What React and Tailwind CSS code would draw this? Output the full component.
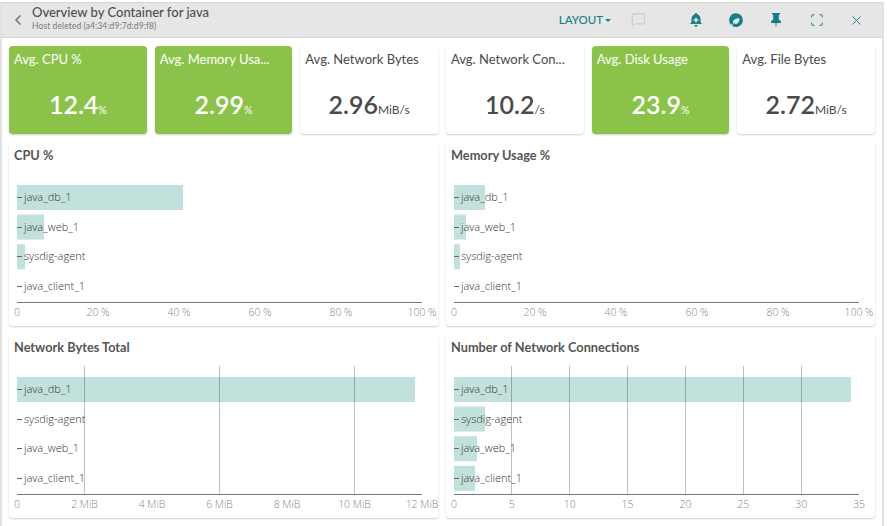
import { ChevronLeft, MessageSquare, Scan, X } from 'lucide-react';

const stats = [
  { title: 'Avg. CPU %', value: '12.4', unit: '%', green: true },
  { title: 'Avg. Memory Usa...', value: '2.99', unit: '%', green: true },
  { title: 'Avg. Network Bytes', value: '2.96', unit: 'MiB/s' },
  { title: 'Avg. Network Con...', value: '10.2', unit: '/s' },
  { title: 'Avg. Disk Usage', value: '23.9', unit: '%', green: true },
  { title: 'Avg. File Bytes', value: '2.72', unit: 'MiB/s' },
];

const pct = ['0', '20 %', '40 %', '60 %', '80 %', '100 %'];

const charts = [
  {
    title: 'CPU %',
    ticks: pct,
    rows: [['java_db_1', 166], ['java_web_1', 27], ['sysdig-agent', 8], ['java_client_1', 0]],
  },
  {
    title: 'Memory Usage %',
    ticks: pct,
    rows: [['java_db_1', 31], ['java_web_1', 12], ['sysdig-agent', 6], ['java_client_1', 0]],
  },
  {
    title: 'Network Bytes Total',
    gridEvery: 2,
    ticks: ['0', '2 MiB', '4 MiB', '6 MiB', '8 MiB', '10 MiB', '12 MiB'],
    rows: [['java_db_1', 398], ['sysdig-agent', 0], ['java_web_1', 0], ['java_client_1', 0]],
  },
  {
    title: 'Number of Network Connections',
    gridEvery: 1,
    ticks: ['0', '5', '10', '15', '20', '25', '30', '35'],
    rows: [['java_db_1', 397], ['sysdig-agent', 31], ['java_web_1', 23], ['java_client_1', 21]],
  },
];

function StatCard({ title, value, unit, green }) {
  return (
    <div className={`h-[88px] min-w-0 rounded-sm px-[5px] pt-[4px] shadow-[0_1px_2px_rgba(0,0,0,0.2)] ${green ? 'bg-[#8bc34a] text-white' : 'bg-white text-[#4a4a4a]'}`}>
      <p className="truncate text-[13px] leading-[18px]">{title}</p>
      <p className="mt-[19px] text-center leading-[34px]">
        <span className="text-[25px] font-semibold">{value}</span>
        <span className={unit === '%' ? 'text-[10.5px]' : 'text-[12px]'}>{unit}</span>
      </p>
    </div>
  );
}

function BarChart({ title, rows, ticks, gridEvery }) {
  const left = 8;
  const width = 405;
  const step = width / (ticks.length - 1);
  const gridLines = gridEvery ? ticks.map((t, i) => i).filter((i) => i > 0 && i < ticks.length - 1 && (i - 1) % gridEvery === 0) : [];
  return (
    <div className="h-[184px] rounded-sm bg-white shadow-[0_1px_2px_rgba(0,0,0,0.2)]">
      <p className="px-[5px] pb-[1px] pt-[4px] text-[12.75px] font-bold leading-[18px] text-[#555]">{title}</p>
      <svg width="429" height="161" className="block" style={{ fontFamily: '"Open Sans", sans-serif' }}>
        {rows.map(([name, w], i) => (
          <rect key={name} x={left} y={20 + i * 29.6} width={w} height={25} fill="#c3e1dc" />
        ))}
        {gridLines.map((i) => {
          const x = Math.floor(left + step * i) + 0.5;
          return <line key={i} x1={x} x2={x} y1={9} y2={137} stroke="#000" strokeOpacity="0.25" />;
        })}
        {rows.map(([name], i) => {
          const y = 20 + i * 29.6;
          return (
            <g key={name}>
              <line x1={left} x2={left + 5} y1={Math.round(y + 12) + 0.5} y2={Math.round(y + 12) + 0.5} stroke="#666" />
              <text x={left + 7} y={y + 16} fontSize="11" fontWeight="300" fill="#333">{name}</text>
            </g>
          );
        })}
        <line x1={left} x2={left + width} y1={137.5} y2={137.5} stroke="#777" />
        {ticks.map((t, i) => (
          <text key={t} x={left + step * i} y={151} fontSize="10.5" fontWeight="300" fill="#888" textAnchor="middle">{t}</text>
        ))}
      </svg>
    </div>
  );
}

export default function App() {
  return (
    <div className="h-[526px] w-[887px] overflow-hidden bg-white pt-[2px] opacity-[0.999]" style={{ fontFamily: 'Lato, sans-serif' }}>
      <div className="h-[524px] w-[884px] border-l-2 border-r-2 border-[#e2e2e2]">
        <div className="flex h-[36px] items-center border-t border-b border-[#d4d4d4] bg-[#e6e6e6] pl-[8px] pr-[18px]">
          <ChevronLeft size={16} strokeWidth={2.5} className="text-[#777]" />
          <div className="ml-[6px] -mt-[4px]">
            <p className="text-[13px] font-medium leading-[15px] text-[#4f4f4f]">Overview by Container for java</p>
            <p className="mt-[1px] text-[8.5px] leading-[10px] tracking-[0.1px] text-[#777]">Host deleted (a4:34:d9:7d:d9:f8)</p>
          </div>
          <span className="ml-auto flex items-center text-[11.5px] font-medium text-[#167f86]">
            LAYOUT
            <span className="ml-[2px] border-x-[3px] border-t-[3px] border-x-transparent border-t-[#167f86]" />
          </span>
          <MessageSquare size={15} strokeWidth={1.25} className="ml-[20px] -mt-[2px] text-[#bdbdbd]" />
          <svg width="16" height="16" viewBox="0 0 16 16" className="ml-[42px]" fill="#167f86">
            <path d="M8 1a1.2 1.2 0 0 1 1.2 1.2C11.4 2.8 12.5 4.6 12.500 7v3l1.500 2H2l1.500-2V7c0-2.400 1.100-4.200 3.300-4.800A1.200 1.200 0 0 1 8 1z" />
            <path d="M6.300 13h3.400a1.700 1.700 0 0 1-3.400 0z" />
            <path d="M7.300 5.500h1.400v1.800h1.800v1.400H8.700v1.800H7.300V8.700H5.500V7.300h1.800z" fill="#e6e6e6" />
          </svg>
          <svg width="16" height="16" viewBox="0 0 16 16" className="ml-[24px]" fill="#167f86">
            <path d="M8 1.200a6.900 6.900 0 0 1 6.900 6.900A6.900 6.900 0 0 1 4 13.700l2.200-2.600 1.200 1c2.200.2 4-1.800 4.200-5.800-3-.2-6.400 1-6.600 4.200l.6.600L3.200 13A6.900 6.900 0 0 1 8 1.200z" />
          </svg>
          <svg width="14" height="16" viewBox="0 0 14 16" className="ml-[25px]" fill="#167f86">
            <path d="M3 1h8v1.300L9.800 3v4.200L12 9.500V11H7.700L7 16l-.7-5H2V9.500l2.200-2.300V3L3 2.300z" />
          </svg>
          <Scan size={14} strokeWidth={1.75} className="ml-[27px] text-[#167f86]" />
          <X size={15} strokeWidth={1.5} className="ml-[25px] text-[#167f86]" />
        </div>
        <div className="flex flex-col gap-[8px] pl-[7px] pr-[7px] pt-[8px]">
          <div className="grid grid-cols-6 gap-[8px]">
            {stats.map((s) => <StatCard key={s.title} {...s} />)}
          </div>
          <div className="grid grid-cols-2 gap-[8px]">
            {charts.map((c) => <BarChart key={c.title} {...c} />)}
          </div>
        </div>
      </div>
    </div>
  );
}
